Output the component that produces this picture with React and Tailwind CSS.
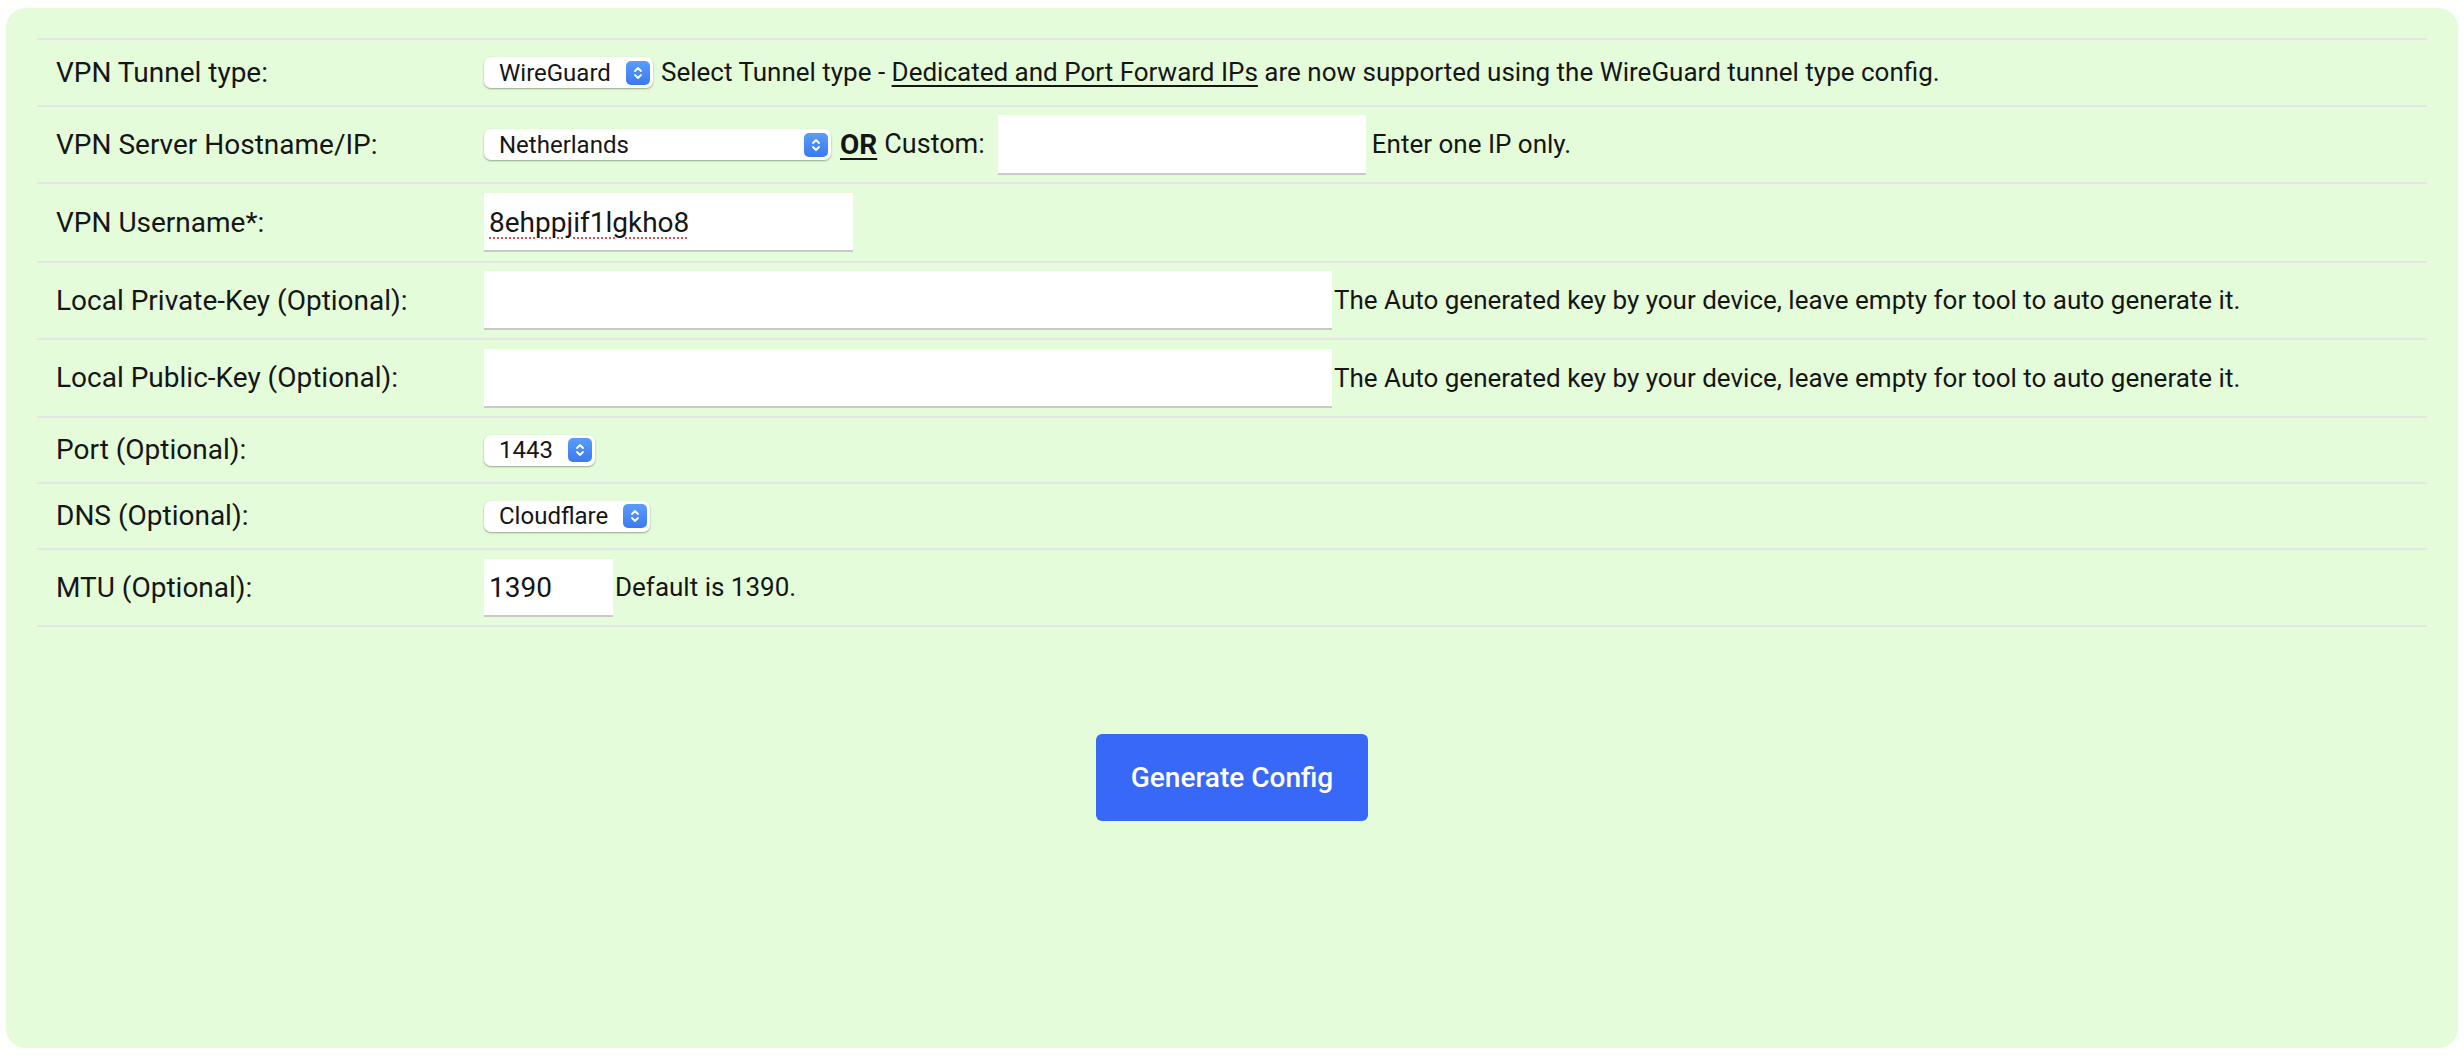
import React from "react";

function Stepper() {
  return (
    <span className="ml-auto flex h-[24px] w-[24px] items-center justify-center rounded-[5px] bg-gradient-to-b from-[#5b9cf9] to-[#3a7af0]">
      <svg width="10" height="16" viewBox="0 0 10 16" fill="none" stroke="white" strokeWidth="1.8" strokeLinecap="round" strokeLinejoin="round">
        <path d="M2 6 L5 3 L8 6" />
        <path d="M2 10 L5 13 L8 10" />
      </svg>
    </span>
  );
}

function Select({ value, width }) {
  return (
    <div
      className={`${width} flex h-[31px] items-center rounded-[7px] bg-white pl-[15px] pr-[3px] text-[24px] shadow-[0_1px_2px_rgba(0,0,0,0.35)]`}
    >
      <span>{value}</span>
      <Stepper />
    </div>
  );
}

function Input({ value, width, height = "h-[59px]", spell }) {
  return (
    <div
      className={`${width} ${height} flex items-center bg-white px-[5px] text-[28px] shadow-[inset_0_-2px_0_#c9c9c9]`}
    >
      {value && (
        <span className={spell ? "underline decoration-dotted decoration-[#e5484d] decoration-2 underline-offset-[6px]" : ""}>
          {value}
        </span>
      )}
    </div>
  );
}

function Row({ label, h, children }) {
  return (
    <div className={`${h} grid grid-cols-[447px_1fr] items-center border-b-2 border-[#e4e6e3]`}>
      <div className="pl-[19px] text-[28px]">{label}</div>
      <div className="flex items-center">{children}</div>
    </div>
  );
}

export default function App() {
  const keyNote = "The Auto generated key by your device, leave empty for tool to auto generate it.";

  return (
    <div className="h-[1058px] bg-white px-[6px] pt-[8px] pb-[10px] font-['Roboto',sans-serif] text-[26px] text-[#161616]">
      <div className="flex h-full flex-col rounded-[20px] bg-[#e4fcda] px-[31px] pt-[30px]">
        <div className="border-t-2 border-[#e4e6e3]">
          <Row label="VPN Tunnel type:" h="h-[67px]">
            <Select value="WireGuard" width="w-[169px]" />
            <span className="ml-[8px]">
              Select Tunnel type - <span className="underline underline-offset-[4px]">Dedicated and Port Forward IPs</span> are now supported using the WireGuard tunnel type config.
            </span>
          </Row>
          <Row label="VPN Server Hostname/IP:" h="h-[77px]">
            <Select value="Netherlands" width="w-[347px]" />
            <span className="ml-[9px] text-[28px] font-bold underline underline-offset-[4px]">OR</span>
            <span className="ml-[7px] text-[27px]">Custom:</span>
            <div className="ml-[13px]">
              <Input width="w-[368px]" height="h-[60px]" />
            </div>
            <span className="ml-[6px]">Enter one IP only.</span>
          </Row>
          <Row label="VPN Username*:" h="h-[79px]">
            <Input value="8ehppjif1lgkho8" width="w-[369px]" spell />
          </Row>
          <Row label="Local Private-Key (Optional):" h="h-[77px]">
            <Input width="w-[848px]" />
            <span className="ml-[2px]">{keyNote}</span>
          </Row>
          <Row label="Local Public-Key (Optional):" h="h-[78px]">
            <Input width="w-[848px]" />
            <span className="ml-[2px]">{keyNote}</span>
          </Row>
          <Row label="Port (Optional):" h="h-[66px]">
            <Select value="1443" width="w-[111px]" />
          </Row>
          <Row label="DNS (Optional):" h="h-[66px]">
            <Select value="Cloudflare" width="w-[166px]" />
          </Row>
          <Row label="MTU (Optional):" h="h-[77px]">
            <Input value="1390" width="w-[129px]" height="h-[58px]" />
            <span className="ml-[2px]">Default is 1390.</span>
          </Row>
        </div>
        <div className="mt-[107px] flex justify-center">
          <button
            type="button"
            className="h-[87px] w-[272px] rounded-[6px] bg-[#3868f7] text-[28px] font-medium text-white"
          >
            Generate Config
          </button>
        </div>
      </div>
    </div>
  );
}
